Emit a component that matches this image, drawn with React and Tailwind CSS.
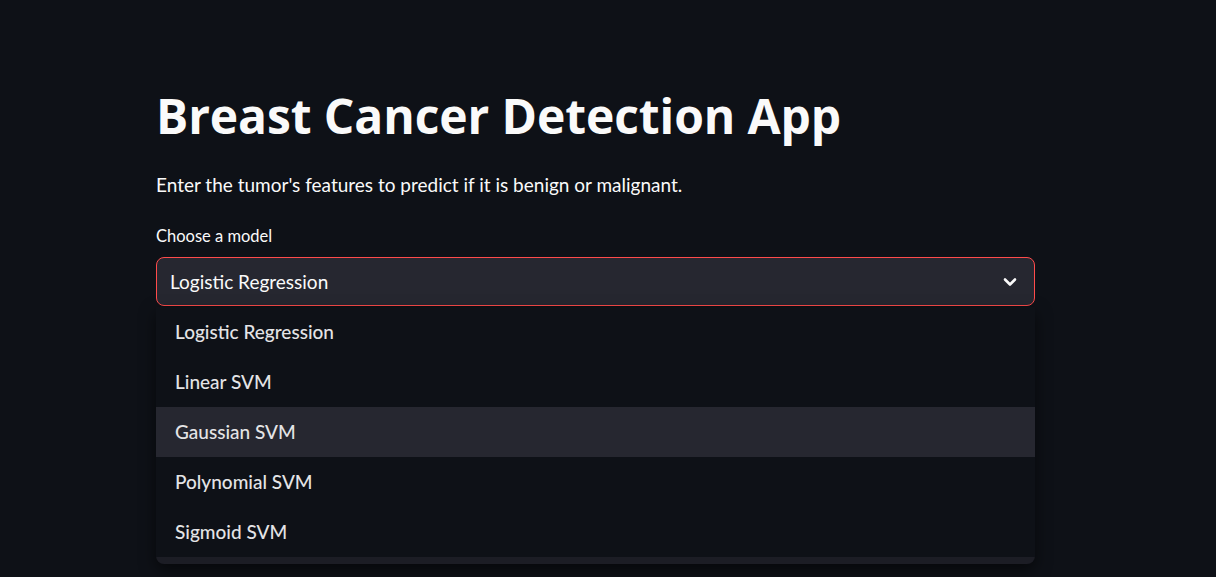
import React from "react";

const models = [
  "Logistic Regression",
  "Linear SVM",
  "Gaussian SVM",
  "Polynomial SVM",
  "Sigmoid SVM",
];

const App = () => {
  return (
    <div
      className="min-h-screen w-full bg-[#0e1117] text-[#fafafa]"
      style={{ fontFamily: "Lato, 'Noto Sans', sans-serif" }}
    >
      <div className="w-[879px] ml-[156px] pt-[86px]">
        {/* Title */}
        <h1
          className="text-[48px] font-bold leading-[60px] tracking-[-0.1px]"
          style={{ fontFamily: "'Open Sans', Lato, sans-serif" }}
        >
          Breast Cancer Detection App
        </h1>
        <p className="mt-[27px] text-[19px] leading-[24px]">
          Enter the tumor's features to predict if it is benign or malignant.
        </p>

        {/* Select */}
        <label className="block mt-[29px] text-[16.5px] leading-[20px]">
          Choose a model
        </label>
        <div className="relative mt-[11px]">
          <div className="h-[49px] flex items-center justify-between pl-[13px] pr-[16px] bg-[#262730] border border-[#ff4b4b] rounded-[8px]">
            <span className="text-[19px] pt-[2px]">Logistic Regression</span>
            <svg
              width="16"
              height="16"
              viewBox="0 0 16 16"
              fill="none"
              stroke="#fafafa"
              strokeWidth="2.6"
              strokeLinecap="round"
              strokeLinejoin="round"
            >
              <path d="M3 5.5l5 5 5-5" />
            </svg>
          </div>

          {/* Dropdown menu */}
          <div className="absolute left-0 right-0 top-[50px] rounded-b-[8px] bg-[#1c1d25] pb-[7px] shadow-[0_6px_16px_rgba(0,0,0,0.55)]">
            <ul className="bg-[#0e1117]">
              {models.map((m, i) => (
                <li
                  key={i}
                  className={`h-[50px] flex items-center pl-[19px] text-[19px] font-medium text-[#e4e4e6] ${
                    i === 2 ? "bg-[#262730]" : ""
                  }`}
                >
                  {m}
                </li>
              ))}
            </ul>
          </div>
        </div>
      </div>
    </div>
  );
};

export default App;
